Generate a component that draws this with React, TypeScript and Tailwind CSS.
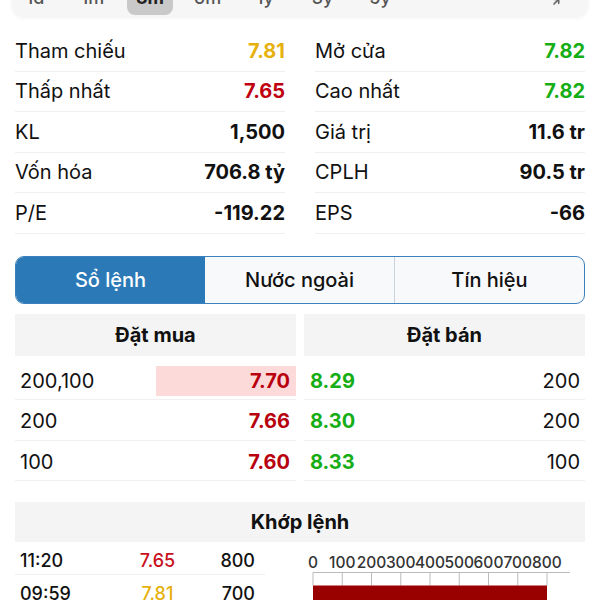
import { Minimize2 } from "lucide-react";

const ranges = ["1d", "1m", "3m", "6m", "1y", "3y", "5y"];

const stats = [
  { label: "Tham chiếu", value: "7.81", color: "text-[#e6b10c]" },
  { label: "Mở cửa", value: "7.82", color: "text-[#16ae16]" },
  { label: "Thấp nhất", value: "7.65", color: "text-[#bf0010]" },
  { label: "Cao nhất", value: "7.82", color: "text-[#16ae16]" },
  { label: "KL", value: "1,500", color: "text-[#111]" },
  { label: "Giá trị", value: "11.6 tr", color: "text-[#111]" },
  { label: "Vốn hóa", value: "706.8 tỷ", color: "text-[#111]" },
  { label: "CPLH", value: "90.5 tr", color: "text-[#111]" },
  { label: "P/E", value: "-119.22", color: "text-[#111]" },
  { label: "EPS", value: "-66", color: "text-[#111]" },
];

const bids = [
  { vol: "200,100", price: "7.70", hl: true },
  { vol: "200", price: "7.66", hl: false },
  { vol: "100", price: "7.60", hl: false },
];

const asks = [
  { price: "8.29", vol: "200" },
  { price: "8.30", vol: "200" },
  { price: "8.33", vol: "100" },
];

const trades = [
  { time: "11:20", price: "7.65", color: "text-[#c8101c]", vol: "800" },
  { time: "09:59", price: "7.81", color: "text-[#e6b10c]", vol: "700" },
];

function VolumeChart() {
  const x0 = 8;
  const step = 29.25;
  const ticks = Array.from({ length: 9 }, (_, i) => x0 + i * step);
  return (
    <svg width="285" height="60" viewBox="0 0 285 60" className="block">
      {ticks.map((x, i) => (
        <text
          key={i}
          x={x}
          y="25.5"
          textAnchor="middle"
          fontSize="15.5"
          fontWeight="500"
          fill="#333"
          fontFamily="Inter, sans-serif"
        >
          {i * 100}
        </text>
      ))}
      <line x1={x0} y1="30.5" x2="265" y2="30.5" stroke="#bbb" strokeWidth="1" />
      {ticks.map((x, i) => (
        <line key={i} x1={x} y1="30.5" x2={x} y2="43.5" stroke="#bbb" strokeWidth="1" />
      ))}
      <rect x={x0} y="43.5" width={step * 8} height="30" fill="#990000" />
    </svg>
  );
}

export default function App() {
  return (
    <div className="w-[600px] h-[600px] overflow-hidden bg-white font-[family-name:Inter,sans-serif] text-[#111]">
      {/* range strip */}
      <div className="mx-3 -mt-[30px] h-[46px] rounded-b-xl bg-[#f6f6f6] shadow-[0_2px_4px_rgba(0,0,0,0.06)] flex items-end pb-[1px] relative">
        <div className="flex gap-[11.5px]">
          {ranges.map((r) => (
            <div
              key={r}
              className={`w-[46px] h-[36px] rounded-lg flex items-center justify-center text-[18px] ${
                r === "3m" ? "bg-[#c9c9c9] font-bold text-[#222]" : "font-medium text-[#555]"
              }`}
            >
              {r}
            </div>
          ))}
        </div>
        <Minimize2 className="absolute right-[20px] top-[20px] w-[16px] h-[16px] text-[#666]" strokeWidth={2.5} />
      </div>

      {/* stats */}
      <div className="grid grid-cols-2 gap-x-[30px] px-[15px] mt-[15px]">
        {stats.map((s) => (
          <div
            key={s.label}
            className="h-[40.5px] flex items-center justify-between border-b border-[#efefef] text-[20px]"
          >
            <span>{s.label}</span>
            <span className={`font-bold ${s.color}`}>{s.value}</span>
          </div>
        ))}
      </div>

      {/* tabs */}
      <div className="mx-[15px] mt-[22px] h-[48px] rounded-[9px] border-[1.5px] border-[#3a80bd] flex overflow-hidden text-[20px] font-medium bg-[#f8f9fa]">
        <div className="flex-1 flex items-center justify-center bg-[#2b7ab7] text-white">Sổ lệnh</div>
        <div className="flex-1 flex items-center justify-center">Nước ngoài</div>
        <div className="flex-1 flex items-center justify-center border-l border-[#c9d3dc]">Tín hiệu</div>
      </div>

      {/* order book */}
      <div className="grid grid-cols-2 gap-x-[8px] px-[15px] mt-[10px]">
        <div className="h-[42px] bg-[#f4f4f4] flex items-center justify-center text-[20px] font-bold">Đặt mua</div>
        <div className="h-[42px] bg-[#f4f4f4] flex items-center justify-center text-[20px] font-bold">Đặt bán</div>
      </div>
      <div className="grid grid-cols-2 gap-x-[8px] px-[15px] mt-[4px]">
        <div>
          {bids.map((b) => (
            <div
              key={b.price}
              className="h-[40.5px] pt-[3px] flex items-center justify-between border-b border-[#efefef] text-[20px]"
            >
              <span className="pl-[5px]">{b.vol}</span>
              <span
                className={`w-[140px] h-[30px] flex items-center justify-end pr-[6px] font-bold text-[#b8000e] ${
                  b.hl ? "bg-[#fddada]" : ""
                }`}
              >
                {b.price}
              </span>
            </div>
          ))}
        </div>
        <div>
          {asks.map((a) => (
            <div
              key={a.price}
              className="h-[40.5px] pt-[3px] flex items-center justify-between border-b border-[#efefef] text-[20px]"
            >
              <span className="pl-[6px] font-bold text-[#16ae16]">{a.price}</span>
              <span className="pr-[5px]">{a.vol}</span>
            </div>
          ))}
        </div>
      </div>

      {/* matched orders */}
      <div className="mx-[15px] mt-[21px] h-[40px] bg-[#f4f4f4] flex items-center justify-center text-[20px] font-bold">
        Khớp lệnh
      </div>
      <div className="flex px-[15px]">
        <div className="w-[250px] shrink-0">
          {trades.map((t) => (
            <div
              key={t.time}
              className="h-[33px] pt-[4px] flex items-center border-b border-[#efefef] text-[18px] font-medium"
            >
              <span className="w-[100px] pl-[5px]">{t.time}</span>
              <span className={`w-[85px] text-center ${t.color}`}>{t.price}</span>
              <span className="w-[60px] text-right pr-[5px]">{t.vol}</span>
            </div>
          ))}
        </div>
        <div className="ml-[40px] shrink-0">
          <VolumeChart />
        </div>
      </div>
    </div>
  );
}
